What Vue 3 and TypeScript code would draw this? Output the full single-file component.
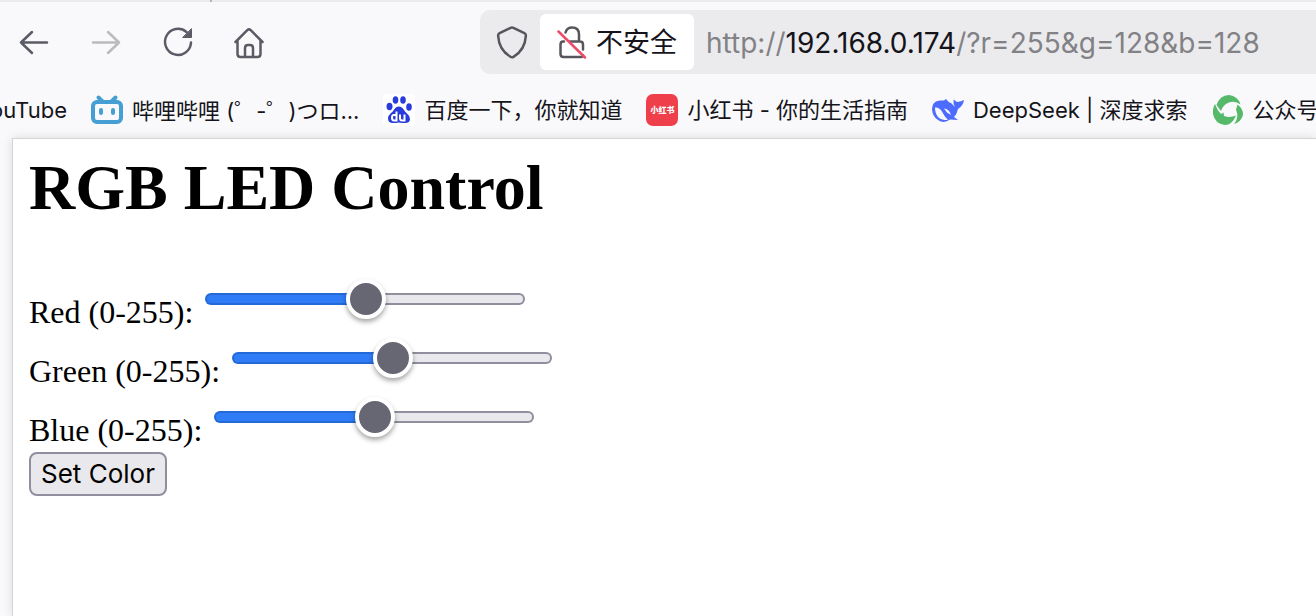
<script setup lang="ts">
import { reactive } from 'vue'

interface Channel {
  id: string
  label: string
  value: number
}

const channels = reactive<Channel[]>([
  { id: 'r', label: 'Red (0-255):', value: 128 },
  { id: 'g', label: 'Green (0-255):', value: 128 },
  { id: 'b', label: 'Blue (0-255):', value: 128 },
])

const fill = (value: number) => ({ '--fill': `${(value / 255) * 100}%` })
</script>

<template>
  <div class="browser">
    <div class="tabstrip"><span class="tab-edge"></span></div>

    <header class="toolbar">
      <nav class="nav">
        <button type="button" aria-label="Back">
          <svg viewBox="0 0 32 32"><path d="M29 16.500H3M14 6 3 16.500 14 27" /></svg>
        </button>
        <button type="button" aria-label="Forward" class="dim">
          <svg viewBox="0 0 32 32"><path d="M3 16.500h26M18 6l11 10.500L18 27" /></svg>
        </button>
        <button type="button" aria-label="Reload">
          <svg viewBox="0 0 32 32">
            <path d="M29 16.500A13 13 0 1 1 24.500 6" />
            <path class="solid" d="M29.500 3v8.500H21z" />
          </svg>
        </button>
        <button type="button" aria-label="Home">
          <svg viewBox="0 0 32 32">
            <path d="M1.500 16 13.300 4.200q1.700-1.700 3.400 0L28.500 16M3.500 14.500V28q0 3 3 3h17q3 0 3-3V14.500M11 30.500V22q0-3 3-3h2q3 0 3 3v8.500" />
          </svg>
        </button>
      </nav>

      <div class="urlbar">
        <svg class="shield" viewBox="0 0 32 34" aria-hidden="true">
          <path d="M14.600 2.800q1.400-.7 2.800 0l11 5.300q1.600.8 1.500 2.500Q29 25 17.500 31.800q-1.500.9-3 0Q3 25 2.100 10.600 2 8.900 3.600 8.100z" />
        </svg>
        <button type="button" class="identity">
          <svg viewBox="0 0 30 34" aria-hidden="true">
            <path class="lock" d="M8.500 7.500Q10 2.500 15 2.500q7 0 7 7V16M7 16.500H6q-2.500 0-2.500 3V29q0 3 3 3H24q2 0 2-1.500M13 16.500h10q3 0 3 3v5" />
            <path class="slash" d="M1.500 6.500 28 32.500" />
          </svg>
          <span>不安全</span>
        </button>
        <div class="address" role="textbox" aria-label="Address" contenteditable="true" spellcheck="false">http://<b>192.168.0.174</b>/?r=255&amp;g=128&amp;b=128</div>
      </div>
    </header>

    <nav class="bookmarks" aria-label="Bookmarks">
      <a href="#" class="cut">YouTube</a>
      <a href="#">
        <svg viewBox="0 0 32 32" aria-hidden="true">
          <path d="M7.500 3.500 12 8M24.500 3.500 20 8" stroke="#469fd3" stroke-width="4" stroke-linecap="round" />
          <rect x="2" y="8" width="28" height="20" rx="4" fill="none" stroke="#469fd3" stroke-width="4" />
          <rect x="8" y="14" width="4" height="7" rx="2" fill="#469fd3" />
          <rect x="20" y="14" width="4" height="7" rx="2" fill="#469fd3" />
        </svg>
        <span>哔哩哔哩 (<i lang="ja">゜</i>-<i lang="ja">゜</i>)<i lang="ja">つロ</i>...</span>
      </a>
      <a href="#">
        <svg viewBox="0 0 32 32" aria-hidden="true">
          <rect width="32" height="32" rx="4" fill="#fff" />
          <g fill="#283bdc">
            <ellipse cx="6.500" cy="12.500" rx="3" ry="3.700" />
            <ellipse cx="12.500" cy="6" rx="2.800" ry="3.800" />
            <ellipse cx="20" cy="6" rx="2.800" ry="3.800" />
            <ellipse cx="26" cy="13" rx="2.800" ry="3.700" />
            <path d="M16 12.500q3 0 5 3.500 1 1.500 3 3.500 3 2.500 3 5.500 0 4-5 4-3 0-6-.5-3 .5-6 .5-5 0-5-4.500 0-3 3-5.500 2-1.500 3-3.200 2-3.300 5-3.300z" />
          </g>
          <path d="M13.500 17.500v9H11q-2 0-2-2.800T11 21h2.500M17 20.500V24q0 2.500 2 2.500h2.500v-6" fill="none" stroke="#fff" stroke-width="2" />
        </svg>
        <span>百度一下，你就知道</span>
      </a>
      <a href="#">
        <span class="redbook" aria-hidden="true">小红书</span>
        <span>小红书 - 你的生活指南</span>
      </a>
      <a href="#">
        <svg viewBox="0 0 32 32" aria-hidden="true">
          <path fill="#4d6bfe" d="M0 15Q0 7 8 6.500h4L14 5q2 3 5 4l4 4q-2-3-1.500-7.500L25 8q3 0 7-2-1 6-6 9-1 5-4 8l4 3-8-.5Q12 30 6 26 0 22 0 15z" />
          <path fill="#f9f9fb" d="M3 13.500q4-.5 7 4 3 6 6 8-6 2-10-2.500Q3 19 3 13.500zM12 14.500q5 0 7 6.500l-4-2.500z" />
        </svg>
        <span>DeepSeek | 深度求索</span>
      </a>
      <a href="#">
        <svg viewBox="0 0 32 32" aria-hidden="true">
          <g fill="#55b969">
            <path d="M4.500 11Q8 1 17 1q9 1 11.500 9.500Q23 6.500 17 8.500q-6 2-8 8.500z" />
            <path d="M3 10q2 6 6 10l2.500-1.500.5 3.500q6 2 12-.5Q20 31 13 31 3 30 1 20 .500 14 3 10z" />
            <path d="M25.500 10.500q6 4.500 5.500 10.500-2 7-9 9 5.500-6 2-14.500z" />
          </g>
        </svg>
        <span>公众号</span>
      </a>
    </nav>

    <main class="page">
      <h1>RGB LED Control</h1>
      <form @submit.prevent>
        <div v-for="c in channels" :key="c.id" class="row">
          <label :for="c.id">{{ c.label }}</label>
          <input :id="c.id" v-model.number="c.value" type="range" min="0" max="255" :name="c.id" :style="fill(c.value)" />
        </div>
        <button type="submit" class="submit">Set Color</button>
      </form>
    </main>
  </div>
</template>

<style>
html,
body,
#app {
  height: 100%;
}
body {
  margin: 0;
  overflow: hidden;
}
</style>

<style scoped>
.browser {
  display: flex;
  flex-direction: column;
  min-height: 100%;
  overflow: hidden;
  background: #f9f9fb;
  color: #15141a;
  font-family: Inter, "Noto Sans CJK SC", sans-serif;
}
.browser button {
  font-family: Inter, "Noto Sans CJK SC", sans-serif;
  color: inherit;
}
.tabstrip {
  height: 2px;
  flex: none;
  background: #ebebed;
}
.tab-edge {
  display: block;
  width: 2px;
  height: 2px;
  margin-left: 210px;
  background: #b5b5b9;
}
.toolbar {
  display: flex;
  align-items: center;
  padding-top: 8px;
}
.nav {
  display: flex;
  flex: none;
  width: 462px;
  gap: 40px;
  padding-left: 18px;
}
.nav button {
  width: 32px;
  height: 32px;
  padding: 0;
  border: 0;
  background: none;
}
.nav svg {
  display: block;
  overflow: visible;
  width: 32px;
  height: 32px;
  fill: none;
  stroke: #5b5b66;
  stroke-width: 2.5;
  stroke-linecap: round;
  stroke-linejoin: round;
}
.nav .solid {
  fill: #5b5b66;
  stroke-width: 1;
}
.nav .dim svg {
  stroke: #bbbbbe;
}
.urlbar {
  display: flex;
  align-items: center;
  flex: 1;
  min-width: 0;
  height: 64px;
  border-radius: 10px 0 0 10px;
  background: #ebebed;
}
.shield {
  flex: none;
  width: 32px;
  height: 34px;
  margin: 0 12px 0 16px;
  fill: none;
  stroke: #57565c;
  stroke-width: 2.5;
}
.identity {
  display: flex;
  align-items: center;
  flex: none;
  gap: 9px;
  height: 56px;
  padding: 0 17px;
  border: 0;
  border-radius: 6px;
  background: #fff;
  font-size: 27px;
  line-height: 36px;
}
.identity span {
  padding-top: 2px;
}
.identity svg {
  width: 30px;
  height: 34px;
  fill: none;
  stroke-width: 2.5;
  stroke-linecap: round;
}
.lock {
  stroke: #57565c;
}
.slash {
  stroke: #ee4b6a;
}
.address {
  margin-left: 12px;
  padding-top: 2px;
  white-space: nowrap;
  font-size: 28px;
  line-height: 36px;
  color: #828286;
  outline: 0;
}
.address b {
  font-weight: 400;
  color: #15141a;
}
.bookmarks {
  display: flex;
  align-items: center;
  gap: 24px;
  height: 56px;
  padding-top: 8px;
  font-size: 22px;
  line-height: 32px;
  white-space: nowrap;
}
.bookmarks a {
  display: flex;
  align-items: center;
  flex: none;
  gap: 9px;
  color: inherit;
  text-decoration: none;
}
.bookmarks .cut {
  width: 67px;
  justify-content: flex-end;
}
.bookmarks i {
  font-family: "Noto Sans CJK JP", sans-serif;
  font-style: normal;
}
.bookmarks svg,
.redbook {
  flex: none;
  width: 32px;
  height: 32px;
}
.redbook {
  border-radius: 7px;
  background: #ee3f4b;
  color: #fff;
  font-size: 8px;
  font-weight: 900;
  text-align: center;
}
.page {
  flex: 1;
  margin-left: 12px;
  padding: 16px;
  border-left: 1px solid #d4d4d7;
  border-top: 1px solid #d4d4d7;
  background: #fff;
  box-shadow: 0 0 10px rgba(0, 0, 0, 0.12);
  color: #000;
  font-family: "Liberation Serif", serif;
}
h1 {
  margin: 0 0 58px;
  font-size: 64px;
  line-height: 66px;
}
.row {
  display: flex;
  align-items: flex-start;
  gap: 12px;
  margin-bottom: 7px;
}
.row:last-of-type {
  margin-bottom: 3px;
}
label {
  padding-top: 15px;
  font-size: 32px;
  line-height: 37px;
}
input[type="range"] {
  appearance: none;
  width: 320px;
  height: 40px;
  margin: 0;
  background: none;
}
input[type="range"]::-webkit-slider-runnable-track {
  box-sizing: border-box;
  height: 12px;
  border: 2px solid transparent;
  border-radius: 6px;
  background:
    linear-gradient(to right, #2f7cf6 var(--fill), #e9e9ed var(--fill)) padding-box,
    linear-gradient(to right, #2469d8 var(--fill), #8f8f9d var(--fill)) border-box;
}
input[type="range"]::-webkit-slider-thumb {
  appearance: none;
  box-sizing: border-box;
  width: 40px;
  height: 40px;
  margin-top: -16px;
  border: 4px solid #fff;
  border-radius: 50%;
  background: #676774;
  box-shadow: 0 3px 5px rgba(0, 0, 0, 0.35);
}
.submit {
  display: block;
  box-sizing: border-box;
  height: 44px;
  padding: 0 10px;
  border: 2px solid #8f8f9d;
  border-radius: 8px;
  background: #e9e9ed;
  font-size: 26px;
  line-height: 40px;
}
</style>
